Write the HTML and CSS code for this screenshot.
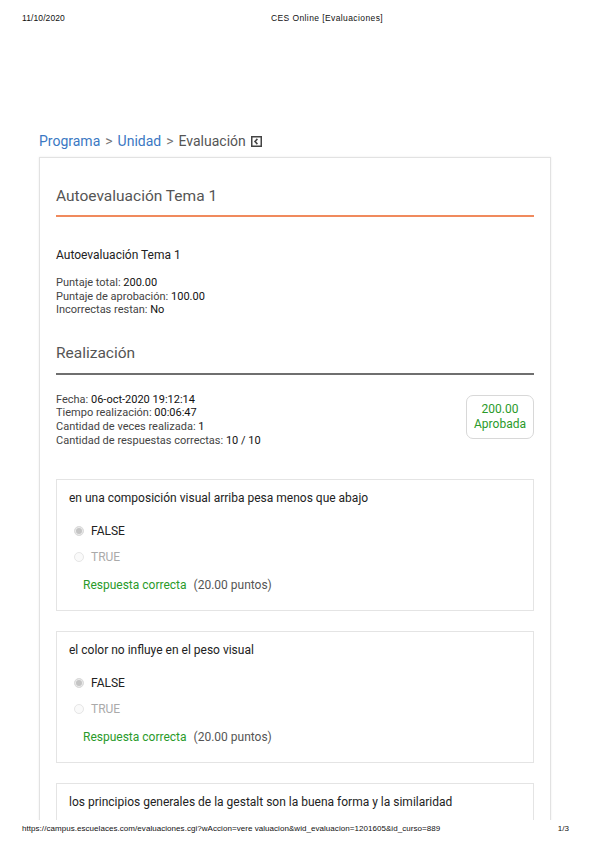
FILE: index.html
```html
<!DOCTYPE html>
<html lang="es">
<head>
<meta charset="utf-8">
<title>CES Online [Evaluaciones]</title>
<link rel="stylesheet" href="styles.css">
</head>
<body>
<div class="print-head">
  <span class="ph-date">11/10/2020</span>
  <span class="ph-title">CES Online [Evaluaciones]</span>
</div>
<div class="viewport">
  <div class="crumbs">
    <a class="crumb-link">Programa</a><span class="sep">&gt;</span><a class="crumb-link">Unidad</a><span class="sep">&gt;</span><span class="crumb-cur">Evaluación</span>
    <span class="back-icon"><svg width="11" height="11" viewBox="0 0 11 11"><rect x="0.75" y="0.75" width="9.5" height="9.5" fill="none" stroke="#444" stroke-width="1.5"/><path d="M6.4 2.9 L4 5.5 L6.4 8.1" fill="none" stroke="#444" stroke-width="1.6"/></svg></span>
  </div>
  <div class="card">
    <h2 class="sec-title">Autoevaluación Tema 1</h2>
    <div class="rule rule-orange"></div>
    <div class="eval-name">Autoevaluación Tema 1</div>
    <div class="info">
      <div>Puntaje total: <b>200.00</b></div>
      <div>Puntaje de aprobación: <b>100.00</b></div>
      <div>Incorrectas restan: <b>No</b></div>
    </div>
    <h2 class="sec-title sec-title-2">Realización</h2>
    <div class="rule rule-grey"></div>
    <div class="result-row">
      <div class="info">
        <div>Fecha: <b>06-oct-2020 19:12:14</b></div>
        <div>Tiempo realización: <b>00:06:47</b></div>
        <div>Cantidad de veces realizada: <b>1</b></div>
        <div>Cantidad de respuestas correctas: <b>10 / 10</b></div>
      </div>
      <div class="badge"><div>200.00</div><div>Aprobada</div></div>
    </div>

    <div class="question">
      <div class="q-text">en una composición visual arriba pesa menos que abajo</div>
      <div class="opt opt-sel"><span class="radio radio-on"></span>FALSE</div>
      <div class="opt opt-off"><span class="radio"></span>TRUE</div>
      <div class="verdict"><span class="ok">Respuesta correcta</span><span class="pts">(20.00 puntos)</span></div>
    </div>

    <div class="question">
      <div class="q-text">el color no influye en el peso visual</div>
      <div class="opt opt-sel"><span class="radio radio-on"></span>FALSE</div>
      <div class="opt opt-off"><span class="radio"></span>TRUE</div>
      <div class="verdict"><span class="ok">Respuesta correcta</span><span class="pts">(20.00 puntos)</span></div>
    </div>

    <div class="question question-cut">
      <div class="q-text">los principios generales de la gestalt son la buena forma y la similaridad</div>
    </div>
  </div>
</div>
<div class="print-foot">
  <span class="pf-url">https://campus.escuelaces.com/evaluaciones.cgi?wAccion=vere valuacion&amp;wid_evaluacion=1201605&amp;id_curso=889</span>
  <span class="pf-page">1/3</span>
</div>
</body>
</html>
```
FILE: styles.css
```css
* { box-sizing: border-box; }
html, body { margin: 0; padding: 0; }
body {
  width: 599px;
  height: 848px;
  overflow: hidden;
  background: #fff;
  font-family: Roboto, "Liberation Sans", Arial, sans-serif;
  color: #222;
}
.print-head {
  height: 36px;
  display: flex;
  align-items: flex-start;
  padding: 13px 22px 0 22px;
  font-family: "Liberation Sans", Arial, sans-serif;
  font-size: 8.5px;
  color: #111;
}
.ph-date { width: 249px; letter-spacing: 0.1px; }
.ph-title { letter-spacing: 0.4px; }

.viewport {
  height: 784px;
  overflow: hidden;
  padding: 96px 0 0 39px;
}
.crumbs {
  height: 18px;
  line-height: 18px;
  font-size: 14px;
  color: #666;
  display: flex;
  align-items: center;
}
.crumb-link { color: #3b78c3; }
.sep { margin: 0 5px; color: #777; }
.crumb-cur { color: #555; }
.back-icon { display: inline-flex; margin-left: 5px; }

.card {
  margin-top: 7px;
  width: 512px;
  border: 1px solid #e2e2e2;
  box-shadow: 0 0 2px rgba(0,0,0,0.08);
  padding: 28px 16px 40px 16px;
}
.sec-title {
  margin: 0;
  font-weight: 400;
  font-size: 15.5px;
  line-height: 20px;
  color: #555;
}
.sec-title-2 { margin-top: 26px; }
.rule { height: 2px; margin-top: 9px; }
.rule-orange { background: #f08a5d; }
.rule-grey { margin-top: 10px; background: #6f6f6f; }

.eval-name {
  margin-top: 30px;
  font-size: 12px;
  line-height: 16px;
  color: #222;
}
.info {
  margin-top: 13px;
  font-size: 11px;
  line-height: 13.6px;
  color: #444;
}
.info b { font-weight: 400; color: #111; }

.result-row {
  display: flex;
  justify-content: space-between;
  align-items: flex-start;
  margin-top: 18px;
}
.result-row .info { margin-top: 0; }
.badge {
  margin-top: 2px;
  width: 68px;
  height: 44px;
  border: 1px solid #d8d8d8;
  border-radius: 7px;
  display: flex;
  flex-direction: column;
  justify-content: center;
  align-items: center;
  font-size: 12px;
  line-height: 15px;
  color: #2a9a2a;
}

.question {
  margin-top: 32px;
  border: 1px solid #e4e4e4;
  padding: 10px 12px 17px 12px;
}
.question + .question { margin-top: 20px; }
.question-cut { min-height: 132px; }
.q-text {
  font-size: 12px;
  line-height: 16px;
  color: #222;
}
.opt {
  display: flex;
  align-items: center;
  font-size: 12px;
  line-height: 16px;
  margin-left: 5px;
}
.opt-sel { margin-top: 17px; color: #222; }
.opt-off { margin-top: 10px; color: #aaa; }
.radio {
  width: 10px;
  height: 10px;
  border-radius: 50%;
  border: 1px solid #e6e6e6;
  background: #fafafa;
  margin-right: 7px;
}
.radio-on {
  background: #c4c4c4;
  border-color: #dcdcdc;
  box-shadow: inset 0 0 0 1px #ececec;
}
.verdict {
  margin-top: 12px;
  margin-left: 14px;
  font-size: 12px;
  line-height: 16px;
}
.ok { color: #2a9a2a; }
.pts { margin-left: 7px; color: #555; }

.print-foot {
  height: 28px;
  display: flex;
  justify-content: space-between;
  padding: 4px 30px 0 22px;
  font-family: "Liberation Sans", Arial, sans-serif;
  font-size: 8px;
  color: #111;
  letter-spacing: 0.05px;
}
```
